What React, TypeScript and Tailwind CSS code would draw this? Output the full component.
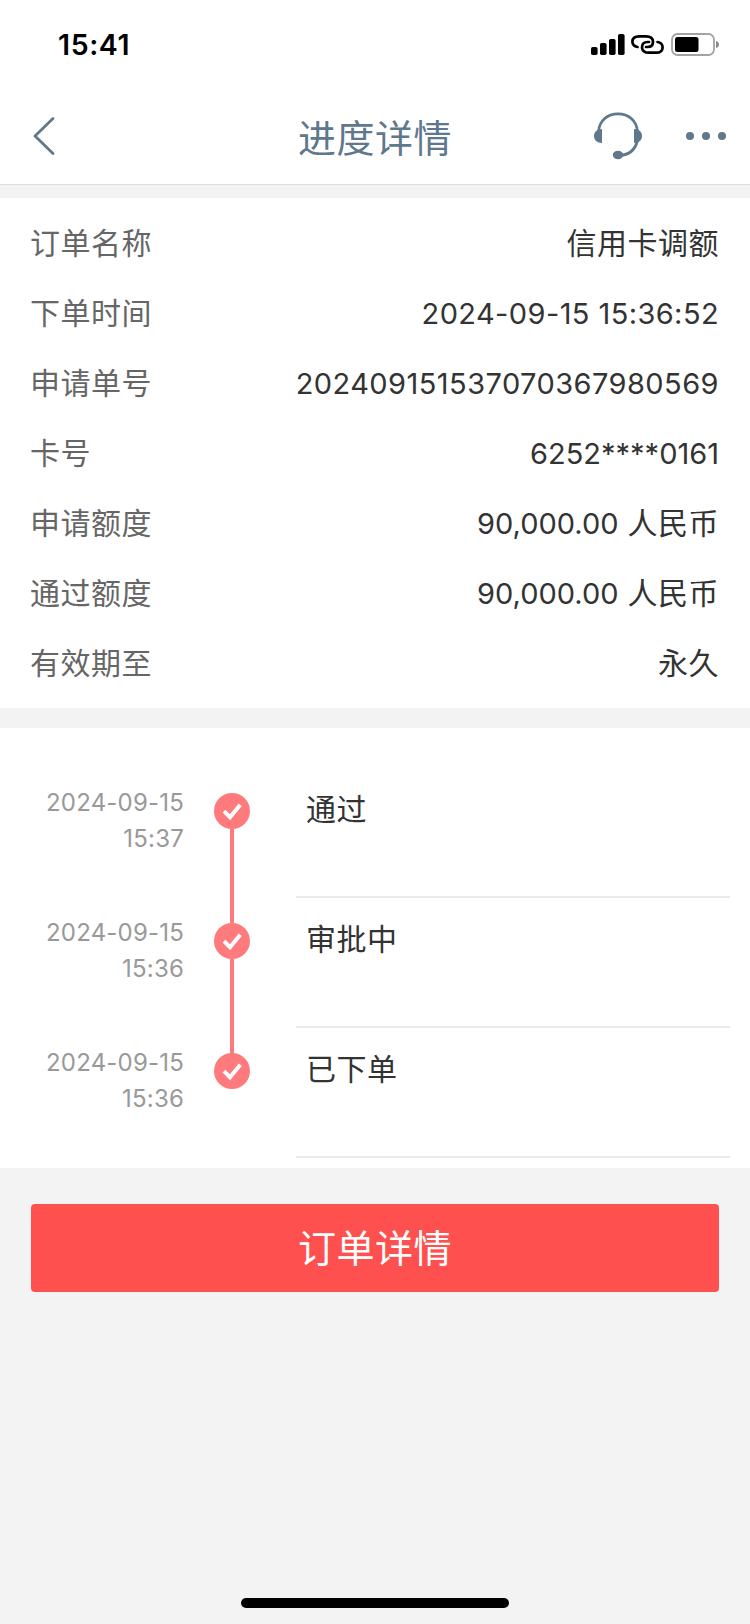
import { Fragment } from "react";

interface DetailItem {
  label: string;
  value: string;
  unit?: string;
  valueClass: string;
}

interface ProgressStep {
  date: string;
  time: string;
  title: string;
}

const textValue = "text-[30px] tracking-[0.5px]";

const details: DetailItem[] = [
  { label: "订单名称", value: "信用卡调额", valueClass: textValue },
  { label: "下单时间", value: "2024-09-15 15:36:52", valueClass: "pt-0.5 text-[29px] tracking-[0.4px]" },
  { label: "申请单号", value: "202409151537070367980569", valueClass: "pt-0.5 text-[29px] tracking-[0.44px]" },
  { label: "卡号", value: "6252****0161", valueClass: "pt-0.5 text-[29px]" },
  { label: "申请额度", value: "90,000.00", unit: "人民币", valueClass: "text-[29px]" },
  { label: "通过额度", value: "90,000.00", unit: "人民币", valueClass: "text-[29px]" },
  { label: "有效期至", value: "永久", valueClass: textValue },
];

const steps: ProgressStep[] = [
  { date: "2024-09-15", time: "15:37", title: "通过" },
  { date: "2024-09-15", time: "15:36", title: "审批中" },
  { date: "2024-09-15", time: "15:36", title: "已下单" },
];

const StatusBar = () => (
  <div className="flex h-[88px] items-start justify-between pl-[58px] pr-[30px] text-black">
    <span className="mt-[27px] text-[28.5px] leading-[36px] font-semibold tracking-[0.6px]">15:41</span>
    <div className="mt-[33px] flex items-start">
      <svg width="34" height="22" viewBox="0 0 34 22" fill="currentColor">
        <rect x="0" y="14" width="6.6" height="8" rx="1.8" />
        <rect x="9" y="10" width="6.6" height="12" rx="1.8" />
        <rect x="18" y="6" width="6.6" height="16" rx="1.8" />
        <rect x="27" y="1" width="6.6" height="21" rx="1.8" />
      </svg>
      <svg className="ml-[6px]" width="33" height="23" viewBox="0 0 33 23" fill="none" stroke="currentColor" strokeWidth="2.7" strokeLinecap="round">
        <path d="M6.5 14 C3 13.5 1.4 11.5 1.4 8.6 C1.4 5 4 3.3 8 3.3 H15 C19.5 3.3 22 5.5 22 8.8 C22 12 20 14 16.5 14 H15" />
        <path d="M26.5 9 C30 9.5 31.6 11.5 31.6 14.4 C31.6 18 29 19.7 25 19.7 H18 C13.5 19.7 11 17.5 11 14.2 C11 11 13 9 16.5 9 H18" />
      </svg>
      <svg className="ml-[7px]" width="49" height="23" viewBox="0 0 49 23">
        <rect x="1" y="1" width="42" height="21" rx="5.5" fill="none" stroke="#a3a3a3" strokeWidth="1.8" />
        <rect x="4" y="4" width="23.5" height="15" rx="2.5" fill="currentColor" />
        <path d="M45 8 Q48 9 48 11.5 Q48 14 45 15 Z" fill="#8c8c8c" />
      </svg>
    </div>
  </div>
);

const NavBar = () => (
  <header className="grid h-[97px] grid-cols-3 items-center border-b border-[#dedede] px-6 text-[#5f788c]">
    <button className="w-10" aria-label="返回">
      <svg width="40" height="40" viewBox="0 0 40 40" fill="none" stroke="currentColor" strokeWidth="2.8" strokeLinecap="round" strokeLinejoin="round">
        <path d="M29 2.5 L11 20 L29 37.5" />
      </svg>
    </button>
    <h1 className="pt-[3px] text-center text-[38px] leading-[56px] tracking-[0.5px]">进度详情</h1>
    <div className="flex items-center justify-end">
      <svg width="50" height="50" viewBox="0 0 50 50" fill="none" stroke="currentColor" strokeWidth="2.8">
        <path d="M5.6 20 C6.5 9.5 14.5 2.8 25 2.8 C35.5 2.8 43.5 9.5 44.4 20" />
        <path d="M44.4 30 C42 38.5 36 44 27 44.3" />
        <path d="M9 18 V32 C4 32 1 29 1 25 C1 21 4 18 9 18 Z" fill="currentColor" stroke="none" />
        <path d="M41 18 V32 C46 32 49 29 49 25 C49 21 46 18 41 18 Z" fill="currentColor" stroke="none" />
        <ellipse cx="25" cy="44" rx="5.2" ry="4.2" fill="currentColor" stroke="none" />
      </svg>
      <svg className="ml-[43px]" width="40" height="8" viewBox="0 0 40 8" fill="currentColor">
        <circle cx="4" cy="4" r="4" />
        <circle cx="20" cy="4" r="4" />
        <circle cx="36" cy="4" r="4" />
      </svg>
    </div>
  </header>
);

const StepIcon = () => (
  <svg className="shrink-0" width="36" height="36" viewBox="0 0 36 36">
    <circle cx="18" cy="18" r="18" fill="#ff7a7c" />
    <path d="M10 18.2 L16 24.2 L26.3 11.8" fill="none" stroke="#fff" strokeWidth="4" />
  </svg>
);

export default function App() {
  return (
    <div className="flex h-[1624px] w-[750px] flex-col bg-[#f3f3f3] font-['Inter','Noto_Sans_CJK_SC',sans-serif]">
      <div className="bg-white">
        <StatusBar />
        <NavBar />
      </div>

      {/* 订单信息 */}
      <section className="mt-[13px] bg-white py-[10px] pr-[31px] pl-[30px]">
        {details.map((item) => (
          <div key={item.label} className="flex h-[70px] items-center justify-between">
            <span className="text-[30px] tracking-[0.5px] text-[#666]">{item.label}</span>
            <span className={`${item.valueClass} text-[#333]`}>
              {item.value}
              {item.unit && <span className="text-[30px] tracking-[0.5px]"> {item.unit}</span>}
            </span>
          </div>
        ))}
      </section>

      {/* 进度 */}
      <section className="mt-5 grid grid-cols-[184px_30px_36px_46px_1fr] bg-white pt-10 pr-5 pb-[10px]">
        {steps.map((step, index) => (
          <Fragment key={index}>
            <div className="h-[130px] pt-[17px] text-right text-[24px] leading-[36px] tracking-[0.2px] text-[#999]">
              <p>{step.date}</p>
              <p>{step.time}</p>
            </div>
            <div />
            <div className="flex flex-col items-center">
              <div className={index === 0 ? "h-[25px]" : "h-[25px] w-1 bg-[#ff7a7c]"} />
              <StepIcon />
              {index < steps.length - 1 && <div className="w-1 grow bg-[#ff7a7c]" />}
            </div>
            <div />
            <div className="border-b-2 border-[#ebebeb] pt-[19px] pl-[10px] text-[30px] leading-[45px] tracking-[0.5px] text-[#333]">
              {step.title}
            </div>
          </Fragment>
        ))}
      </section>

      <button className="mx-[31px] mt-9 h-[88px] rounded bg-[#ff5050] text-[38px] tracking-[0.5px] text-white">
        订单详情
      </button>

      <div className="mt-auto mb-4 ml-[241px] h-[10px] w-[268px] rounded-full bg-black" />
    </div>
  );
}
